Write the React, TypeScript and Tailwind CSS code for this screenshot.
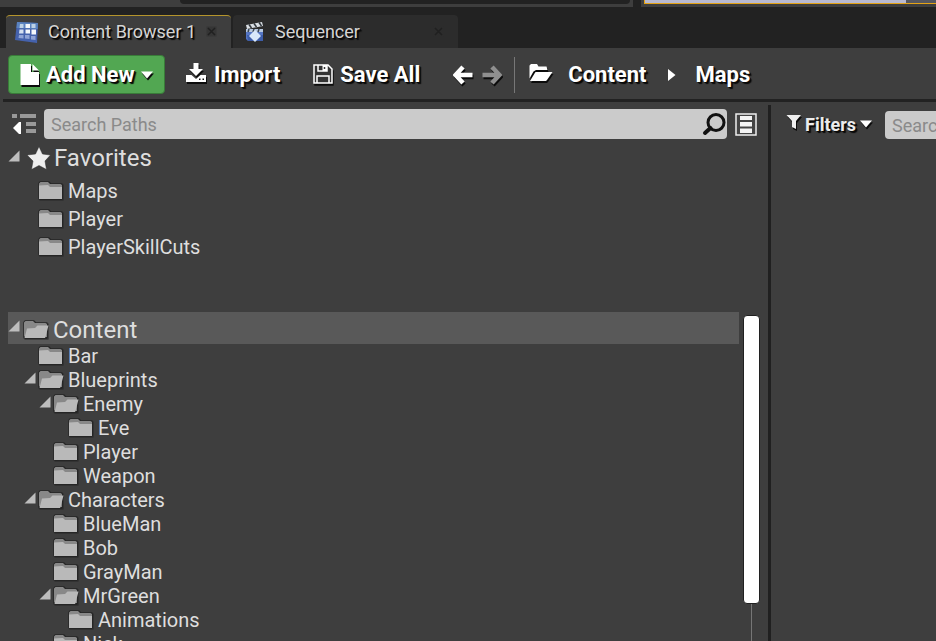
import type { ReactNode } from "react";

const SHADOW = "[text-shadow:1px_1px_0_#080808,2px_2px_1px_#080808]";
const ICON_SHADOW = "drop-shadow-[1px_2px_0px_#0c0c0c]";

type Folder = { name: string; depth: number; open?: boolean };

const favorites = ["Maps", "Player", "PlayerSkillCuts"];

const folders: Folder[] = [
  { name: "Bar", depth: 1 },
  { name: "Blueprints", depth: 1, open: true },
  { name: "Enemy", depth: 2, open: true },
  { name: "Eve", depth: 3 },
  { name: "Player", depth: 2 },
  { name: "Weapon", depth: 2 },
  { name: "Characters", depth: 1, open: true },
  { name: "BlueMan", depth: 2 },
  { name: "Bob", depth: 2 },
  { name: "GrayMan", depth: 2 },
  { name: "MrGreen", depth: 2, open: true },
  { name: "Animations", depth: 3 },
  { name: "Nick", depth: 2 },
];

function FolderIcon({ open = false }: { open?: boolean }) {
  return (
    <svg width="28" height="22" viewBox="0 0 28 22" className="shrink-0" aria-hidden="true">
      <path d="M1 3 L3 1 H12 L14 3 H25 L27 5 V20 L26 21 H3 L1 19 Z" fill="#262626" opacity="0.5" />
      <path d="M1.500 3.500 L3 1.500 H12 L14 3.500 H25 L26 5 V19 L25 20 H3 L1.500 18 Z" fill="#222222" opacity="0.8" />
      <path d="M2 17 V3.500 L3.500 2 H11 L13 4 H23.500 L25 5 V18 H3 Z" fill="#888888" />
      {open ? (
        <path d="M2.500 19 L5 9.500 L13 9 L15.500 6.500 H26.500 L23.500 18 L23 19 Z" fill="#b9b9b9" />
      ) : (
        <path d="M2 5.500 L11 5 L13 7 H25 V19 H2 Z" fill="#b9b9b9" />
      )}
    </svg>
  );
}

function Expander({ label }: { label: string }) {
  return (
    <button type="button" aria-label={label} className="mb-1 flex h-4 w-3 shrink-0 items-center">
      <svg width="12" height="12" viewBox="0 0 12 12" aria-hidden="true">
        <path d="M0.500 11.500 L11.500 0.500 V11.500 Z" fill="#bdbdbd" />
      </svg>
    </button>
  );
}

function CloseIcon() {
  return (
    <svg width="11" height="11" viewBox="0 0 11 11" aria-hidden="true">
      <rect x="0.500" y="0.500" width="10" height="10" fill="#2c2c2c" opacity="0.5" />
      <path d="M2 2 L9 9 M9 2 L2 9" stroke="#202020" strokeWidth="1.500" />
    </svg>
  );
}

function BrowserTabIcon() {
  return (
    <svg width="26" height="24" viewBox="0 0 26 24" aria-hidden="true">
      <path d="M3 2 L24 3 L23 23 L1 20 Z" fill="#4562ac" />
      <path d="M3 2 L24 3 L23.700 9 L2.500 8 Z" fill="#5a83bf" />
      <path d="M6 4 h3.500 v4 h-4z M17.500 4 h4 v4 h-4z" fill="#bdd2e6" />
      <path d="M11.500 4 h4.500 v4 h-4.500z M11.500 9.500 h4.500 v4 h-4.500z M17.500 9.500 h4.500 v5 h-4.500z" fill="#f4f7fb" />
      <path d="M5.500 9.500 h4 v4 h-4.500z" fill="#d4dff0" />
      <path d="M5 15 h4.500 v3.500 l-5-0.500z M11 15 h4.500 v4 l-4.500-0.500z M17 16 h4.500 v4 l-4.500-0.500z" fill="#8fa3d5" />
    </svg>
  );
}

function SequencerIcon() {
  return (
    <svg width="20" height="22" viewBox="0 0 20 22" aria-hidden="true">
      <path d="M1 9 H18 V20 H3 L1 18 Z" fill="#5576c4" />
      <path d="M2 14 H18 V20 H3 Z" fill="#3d5da9" />
      <path d="M1 4 L17 1 L18 5 L2 8 Z" fill="#d9dee3" />
      <path d="M4 3.500 L6.500 7 M9 2.500 L11.500 6 M14 1.500 L16.500 5" stroke="#30363c" strokeWidth="1.500" />
      <path d="M1 8 H18 V11 H1 Z" fill="#b7c8df" />
      <path d="M4 8 L3 11 M9 8 L8 11 M14 8 L13 11" stroke="#39434f" strokeWidth="1.500" />
      <path d="M10 9 L16 15 L10 21 L4 15 Z" fill="#d8e8fa" />
    </svg>
  );
}

function ArrowIcon({ back = false }: { back?: boolean }) {
  return (
    <svg width="20" height="20" viewBox="0 0 20 20" className={ICON_SHADOW} aria-hidden="true">
      <path
        d={back ? "M10 2 L2.500 10 L10 18 M3 10 H19.500" : "M10 2 L17.500 10 L10 18 M0.500 10 H17"}
        fill="none"
        stroke={back ? "#ffffff" : "#8f8f8f"}
        strokeWidth="4.500"
      />
    </svg>
  );
}

function CaretDown() {
  return (
    <svg width="14" height="8" viewBox="0 0 14 8" className={ICON_SHADOW} aria-hidden="true">
      <path d="M1 0.500 H13 L7 7.500 Z" fill="#fff" />
    </svg>
  );
}

function ToolButton({ icon, children, className }: { icon: ReactNode; children: ReactNode; className: string }) {
  return (
    <button type="button" className={`flex shrink-0 items-center gap-[7px] ${className}`}>
      {icon}
      <span className={SHADOW}>{children}</span>
    </button>
  );
}

function Toolbar() {
  return (
    <div className="flex h-[51px] shrink-0 items-center overflow-hidden pt-0.5 pl-2 text-[22px] font-bold text-white">
      <button
        type="button"
        className="flex h-[39px] w-[157px] shrink-0 items-center rounded-sm border border-[#397c39] bg-[#52a752] pl-[11px]"
      >
        <svg width="20" height="23" viewBox="0 0 20 23" className={ICON_SHADOW} aria-hidden="true">
          <path d="M0.500 1 H11 V9 H19 V22 H0.500 Z M12.500 1 L19 7.500 H12.500 Z" fill="#fff" />
        </svg>
        <span className={`ml-1.5 ${SHADOW}`}>Add New</span>
        <span className="ml-[5px]">
          <CaretDown />
        </span>
      </button>
      <ToolButton
        className="ml-5"
        icon={
          <svg width="22" height="21" viewBox="0 0 22 21" className={`mb-1 ${ICON_SHADOW}`} aria-hidden="true">
            <path d="M8.500 1 H13.500 V7 H18 L11 14 L4 7 H8.500 Z" fill="#fff" />
            <path
              d="M1 13 H6.500 L11 17 L15.500 13 H21 V20 H1 Z M14 16.500 v1.500 h1.500 v-1.500 Z M17.500 16.500 v1.500 h1.500 v-1.500 Z"
              fill="#fff"
              fillRule="evenodd"
            />
          </svg>
        }
      >
        Import
      </ToolButton>
      <ToolButton
        className="ml-[33px]"
        icon={
          <svg width="20" height="20" viewBox="0 0 20 20" className={`mb-0.5 ${ICON_SHADOW}`} aria-hidden="true">
            <path d="M1 1 H15 L19 5 V19 H1 Z" fill="#343434" stroke="#fff" strokeWidth="1.500" />
            <path d="M5 1 V7 H14 V1 M4 19 V12 H16 V19" fill="none" stroke="#fff" strokeWidth="1.500" />
            <path d="M9.500 1 H14 V7 H9.500 Z" fill="#fff" />
            <path d="M11.500 3 V5" stroke="#343434" strokeWidth="1.500" />
          </svg>
        }
      >
        Save All
      </ToolButton>
      <button type="button" aria-label="Back" className="ml-[33px] shrink-0">
        <ArrowIcon back />
      </button>
      <button type="button" aria-label="Forward" className="ml-[9px] shrink-0">
        <ArrowIcon />
      </button>
      <div className="ml-3 h-9 w-px shrink-0 bg-[#777777]" />
      <button type="button" aria-label="Choose a path" className="ml-3.5 shrink-0">
        <svg width="24" height="19" viewBox="0 0 24 19" className={`mb-1 ${ICON_SHADOW}`} aria-hidden="true">
          <path d="M0.500 15.500 V2.500 L2 1 H8 L9.500 3.500 H17.500 L18.500 7 H7 L4.500 8.500 Z" fill="#fff" />
          <path d="M6.500 9 H23.500 L18 17 L17 18 H1 Z" fill="#fff" />
        </svg>
      </button>
      <nav aria-label="Current path" className="ml-[15px] flex shrink-0 items-center">
        <a href="#content" className={SHADOW}>Content</a>
        <svg width="9" height="14" viewBox="0 0 9 14" className="mx-5" aria-hidden="true">
          <path d="M1 1 L8.500 7 L1 13 Z" fill="#fff" />
        </svg>
        <a href="#maps" className={SHADOW}>Maps</a>
      </nav>
    </div>
  );
}

function PathsPanel() {
  return (
    <section aria-label="Paths" className="flex min-w-0 flex-col">
      <div className="flex h-10 shrink-0 items-center pt-1 pr-[11px] pl-3">
        <button type="button" aria-label="Hide sources panel" className="shrink-0">
          <svg width="25" height="22" viewBox="0 0 25 22" aria-hidden="true">
            <path d="M0 1 H5 V5 H0 Z M8 1 H24 V5 H8 Z M14 9 H24 V13 H14 Z M14 16 H24 V20 H14 Z" fill="#999" />
            <path d="M1 15 L7 9 H9 V21 H7 Z" fill="#fff" />
          </svg>
        </button>
        <div className="ml-[7px] flex h-[30px] min-w-0 flex-1 items-center rounded-sm bg-[#cbcbcb] pr-px">
          <input
            type="text"
            aria-label="Search Paths"
            placeholder="Search Paths"
            className="min-w-0 flex-1 bg-transparent pl-[7px] text-[18px] text-[#333] outline-none placeholder:text-[#8a8a8a]"
          />
          <svg width="24" height="24" viewBox="0 0 24 24" aria-hidden="true">
            <circle cx="14" cy="10.500" r="8" fill="none" stroke="#111" strokeWidth="3" />
            <path d="M8.500 16 L3 21" stroke="#111" strokeWidth="4" strokeLinecap="round" />
          </svg>
        </div>
        <button type="button" aria-label="View list" className="ml-2 shrink-0">
          <svg width="22" height="23" viewBox="0 0 22 23" aria-hidden="true">
            <rect x="1" y="1" width="20" height="21" fill="#444" stroke="#eee" strokeWidth="1.500" />
            <path d="M5 3 H17 V7 H5 Z M5 9 H17 V13.500 H5 Z M5 15.500 H17 V20 H5 Z" fill="#f4f4f4" />
          </svg>
        </button>
      </div>

      <div className="h-[170px] shrink-0 pl-2 text-[20px] text-[#dedede]">
        <div className="mb-[3px] flex h-8 items-center text-[24px]">
          <Expander label="Collapse Favorites" />
          <svg width="26" height="26" viewBox="0 0 26 26" className="ml-[5px]" aria-hidden="true">
            <path
              d="M14 1.500 L17.500 9 L25.500 10 L20 16 L21.500 24.500 L14 20.500 L6.500 24.500 L8 16 L2 10 L10.500 9 Z"
              fill="#eeeeee"
              stroke="#292929"
              strokeWidth="0.500"
            />
          </svg>
          <span className="ml-[3px]">Favorites</span>
        </div>
        <ul>
          {favorites.map((name) => (
            <li key={name} className="flex h-[28px] items-center gap-[3px] pl-[29px]">
              <FolderIcon />
              <span>{name}</span>
            </li>
          ))}
        </ul>
      </div>

      <div className="flex min-h-0 flex-1">
        <div className="min-w-0 flex-1 overflow-hidden pl-2 text-[20px] text-[#dedede]">
          <div className="flex h-8 items-center bg-[#595959] text-[24px]">
            <Expander label="Collapse Content" />
            <span className="ml-0.5 pt-1">
              <FolderIcon open />
            </span>
            <span className="ml-[3px] pt-1">Content</span>
          </div>
          <ul>
            {folders.map((folder) => (
              <li
                key={`${folder.depth}-${folder.name}`}
                className="flex h-6 items-center"
                style={{ paddingLeft: folder.depth * 15 + 1 }}
              >
                <span className="flex w-[13px] shrink-0">
                  {folder.open && <Expander label={`Collapse ${folder.name}`} />}
                </span>
                <FolderIcon open={folder.open} />
                <span className="ml-[3px]">{folder.name}</span>
              </li>
            ))}
          </ul>
        </div>
        <div className="flex w-[29px] shrink-0 flex-col items-center pr-[5px] pt-[3px]">
          <div className="h-[289px] w-[17px] shrink-0 rounded-sm border border-[#202020] bg-white" />
          <div className="w-px flex-1 bg-[#767676]" />
        </div>
      </div>
    </section>
  );
}

function AssetsPanel() {
  return (
    <section
      aria-label="Assets"
      className="mt-[3px] flex min-w-0 items-start overflow-hidden border-l-[3px] border-[#202020] pl-[15px]"
    >
      <button type="button" className="mt-[3px] flex h-8 shrink-0 items-center text-[18px] font-bold text-[#ececec]">
        <svg width="16" height="16" viewBox="0 0 16 16" className={`mb-1 ${ICON_SHADOW}`} aria-hidden="true">
          <path d="M0.500 1 H15 L10 7 V15 L6 13 V7 Z" fill="#eee" />
        </svg>
        <span className={`ml-[3px] ${SHADOW}`}>Filters</span>
        <span className="ml-[3px]">
          <CaretDown />
        </span>
      </button>
      <input
        type="text"
        aria-label="Search Maps"
        placeholder="Search Maps"
        className="mt-1.5 ml-3 h-7 w-72 shrink-0 rounded-sm bg-[#cbcbcb] px-[7px] text-[18px] text-[#333] outline-none placeholder:text-[#8a8a8a]"
      />
    </section>
  );
}

export default function App() {
  return (
    <main className="flex h-screen w-full flex-col overflow-hidden bg-[#3e3e3e] font-['Roboto',sans-serif]">
      <div className="grid h-[7px] shrink-0 grid-cols-[633fr_295fr] gap-2 bg-[#222222]">
        <div className="bg-[#3e3e3e] pr-[3px] pl-[180px]">
          <div className="h-1 rounded-b-sm bg-[#222222]" />
        </div>
        <div className="bg-[#3e3e3e] pl-[3px]">
          <div className="flex h-1 border-b border-l border-[#e5a315] bg-[#b9bad1]">
            <div className="ml-auto w-[30px] bg-[#55565f]" />
          </div>
        </div>
      </div>

      <div role="tablist" className="flex h-[41px] shrink-0 items-end gap-0.5 bg-[#222222] pl-1.5 text-[18px] text-[#d5d5d5]">
        <div className="flex h-[33px] w-[225px] items-center rounded-t-sm border-t border-[#b5952c] bg-[#3e3e3e] pb-px pl-2">
          <BrowserTabIcon />
          <button type="button" role="tab" aria-selected="true" className={`ml-2 ${SHADOW}`}>
            Content Browser 1
          </button>
          <button type="button" aria-label="Close Content Browser 1" className="mr-3.5 ml-auto">
            <CloseIcon />
          </button>
        </div>
        <div className="flex h-[33px] w-[225px] items-center rounded-t-sm bg-[#2c2c2c] pl-3">
          <SequencerIcon />
          <button type="button" role="tab" aria-selected="false" className={`ml-2.5 ${SHADOW}`}>
            Sequencer
          </button>
          <button type="button" aria-label="Close Sequencer" className="mr-3.5 ml-auto">
            <CloseIcon />
          </button>
        </div>
      </div>

      <Toolbar />
      <div className="ml-[3px] h-[3px] shrink-0 bg-[#222222]" />
      <div className="grid min-h-0 flex-1 grid-cols-[768fr_168fr]">
        <PathsPanel />
        <AssetsPanel />
      </div>
    </main>
  );
}
